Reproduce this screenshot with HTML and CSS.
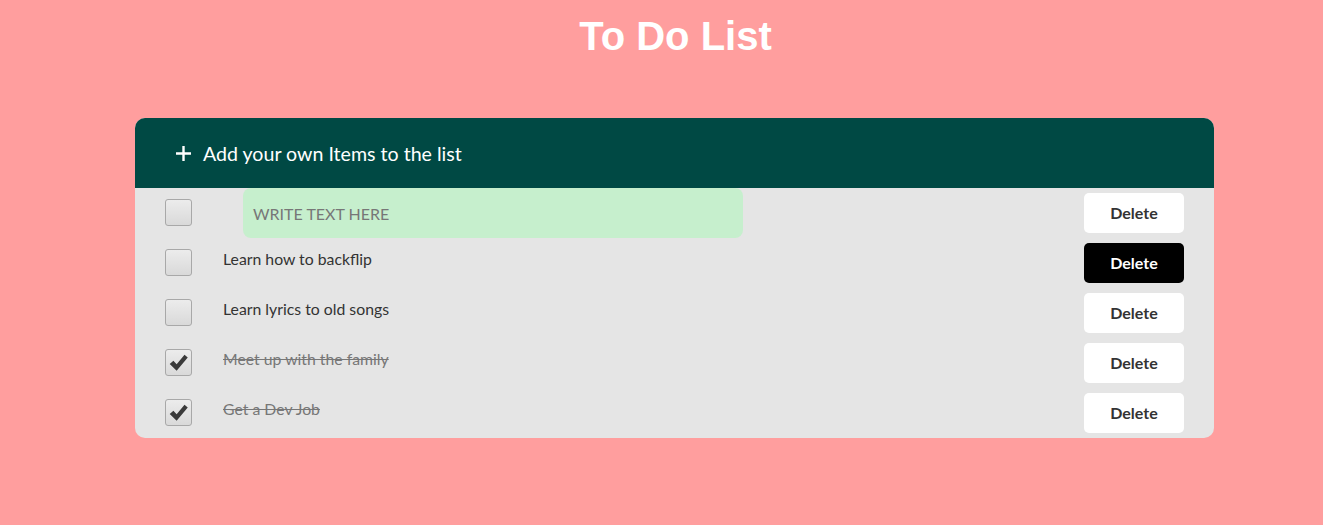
FILE: index.html
```html
<!DOCTYPE html>
<html>
<head>
<meta charset="utf-8">
<link rel="stylesheet" href="styles.css">
</head>
<body>
<h1 class="title">To Do List</h1>
<div class="card">
  <div class="card-head"><svg class="plus" viewBox="0 0 15 15" width="15" height="15"><path d="M7.5 0 V15 M0 7.5 H15" stroke="#fff" stroke-width="2.4"/></svg><span>Add your own Items to the list</span></div>
  <div class="row">
    <span class="box"></span>
    <div class="entry">WRITE TEXT HERE</div>
    <button class="del">Delete</button>
  </div>
  <div class="row">
    <span class="box"></span>
    <span class="label">Learn how to backflip</span>
    <button class="del dark">Delete</button>
  </div>
  <div class="row">
    <span class="box"></span>
    <span class="label">Learn lyrics to old songs</span>
    <button class="del">Delete</button>
  </div>
  <div class="row">
    <span class="box"><svg viewBox="0 0 27 27" width="25" height="25"><path d="M4 15 L8 11.5 L11.5 15.5 L20 5 L23.5 8 L11.5 22.5 Z" fill="#3a3a3a"/></svg></span>
    <span class="label done">Meet up with the family</span>
    <button class="del">Delete</button>
  </div>
  <div class="row">
    <span class="box"><svg viewBox="0 0 27 27" width="25" height="25"><path d="M4 15 L8 11.5 L11.5 15.5 L20 5 L23.5 8 L11.5 22.5 Z" fill="#3a3a3a"/></svg></span>
    <span class="label done">Get a Dev Job</span>
    <button class="del">Delete</button>
  </div>
</div>
</body>
</html>
```
FILE: styles.css
```css
html, body {
  margin: 0;
  padding: 0;
  background: #ff9e9e;
}
body {
  font-family: Lato, "Liberation Sans", sans-serif;
}
.title {
  margin: 0;
  padding-top: 15px;
  text-align: center;
  font-family: "Liberation Sans", Arial, sans-serif;
  font-weight: bold;
  font-size: 40px;
  line-height: 42px;
  color: #ffffff;
  padding-left: 28px;
}
.card {
  margin: 61px 0 0 135px;
  width: 1079px;
  background: #e5e5e5;
  border-radius: 10px;
  overflow: hidden;
}
.card-head {
  height: 70px;
  background: #004944;
  color: #fff;
  display: flex;
  align-items: center;
  padding-left: 41px;
  font-size: 19.6px;
}
.plus {
  display: block;
  margin-right: 12px;
}
.row {
  height: 50px;
  display: flex;
  align-items: center;
  padding-left: 30px;
  padding-right: 30px;
}
.box {
  width: 25px;
  height: 25px;
  border: 1px solid #a8a8a8;
  border-radius: 3px;
  background: linear-gradient(#ececec, #d9d9d9);
  display: flex;
  align-items: center;
  justify-content: center;
  flex: none;
  position: relative;
  top: -1px;
}
.box svg { display: block; }
.entry {
  margin-left: 51px;
  width: 490px;
  height: 50px;
  background: #c6efcd;
  border-radius: 8px;
  display: flex;
  align-items: center;
  padding-left: 10px;
  font-size: 16px;
  color: #777;
  align-self: flex-start;
}
.label {
  margin-left: 31px;
  font-size: 15.8px;
  color: #333;
  position: relative;
  top: -5px;
}
.label.done {
  color: #777;
  text-decoration: line-through;
}
.del {
  margin-left: auto;
  width: 100px;
  height: 40px;
  border: none;
  border-radius: 5px;
  background: #fff;
  color: #333;
  font-family: Lato, "Liberation Sans", sans-serif;
  font-weight: bold;
  font-size: 16px;
  padding: 0 0 2px;
}
.del.dark {
  background: #000;
  color: #fff;
}
```
